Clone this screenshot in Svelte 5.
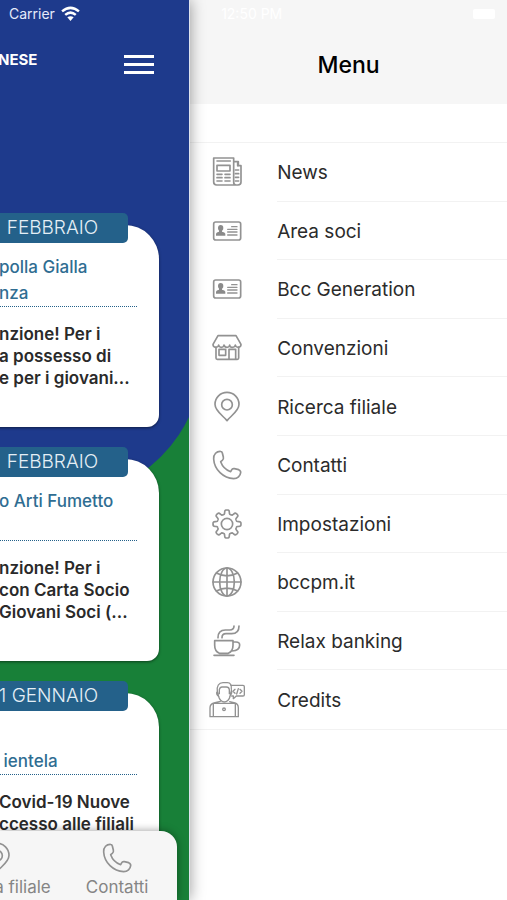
<script lang="ts">
  type Card = { date: string; title: string[]; body: string[] };

  const cards: Card[] = [
    {
      date: 'FEBBRAIO',
      title: ['polla Gialla', 'nza'],
      body: ['nzione! Per i', 'a possesso di', 'e per i giovani...'],
    },
    {
      date: 'FEBBRAIO',
      title: ['o Arti Fumetto'],
      body: ['nzione! Per i', 'con Carta Socio', 'Giovani Soci (...'],
    },
    {
      date: '1 GENNAIO',
      title: ['', '\u00a0ientela'],
      body: ['Covid-19 Nuove', 'ccesso alle filiali'],
    },
  ];

  const menu = [
    { icon: 'news', label: 'News' },
    { icon: 'card', label: 'Area soci' },
    { icon: 'card', label: 'Bcc Generation' },
    { icon: 'shop', label: 'Convenzioni' },
    { icon: 'pin', label: 'Ricerca filiale' },
    { icon: 'phone', label: 'Contatti' },
    { icon: 'gear', label: 'Impostazioni' },
    { icon: 'globe', label: 'bccpm.it' },
    { icon: 'cup', label: 'Relax banking' },
    { icon: 'developer', label: 'Credits' },
  ];

  // eight rounded teeth around the centre of the 108 x 108 icon box
  function gearPath() {
    const points: string[] = [];
    for (let i = 0; i < 160; i++) {
      const a = (i / 160) * Math.PI * 2;
      const r = 36 + 6 * Math.tanh(2.6 * Math.cos(a * 8));
      points.push(`${(54 + r * Math.cos(a)).toFixed(1)} ${(54 + r * Math.sin(a)).toFixed(1)}`);
    }
    return `M${points.join('L')}Z`;
  }

  const gear = gearPath();
</script>

{#snippet icon(name: string)}
  <svg class="icon" viewBox="0 0 108 108" aria-hidden="true">
    {#if name === 'news'}
      <path d="M74 84V12H14v72q0 9 9 9h64q9 0 9-9V35h-8V23H75M74 84q0 9 7 9" />
      <path d="M24 21h40M24 34h39v17H24zM24 61h15M48 61h15M24 71h15M48 71h15M24 81h15M48 81h15M79 48h10M79 59h10M79 70h10M79 81h10M86 35v-9" />
    {:else if name === 'card'}
      <rect x="14" y="27" width="81" height="54" rx="6" />
      <g class="solid">
        <ellipse cx="35" cy="45" rx="8" ry="9" />
        <path d="M21 68v-6q1-4 9-6v-5h9v5q9 2 10 6v6z" />
      </g>
      <path class="thin" d="M68 41h16M56 49h28M56 57h28M56 66h28" />
    {:else if name === 'shop'}
      <path d="M27 17h54l15 26q0 9-8 9t-9-7q-1 7-9 7t-8-7q-1 7-8 7t-9-7q-1 7-8 7t-8-7q-1 7-9 7-8 0-8-9z" />
      <path d="M21 51v33q0 4 4 4h60q4 0 4-4V51M30 58h20v18H30zM60 88V58h20v30" />
    {:else if name === 'pin'}
      <path d="M54 95C46 83 18 68 18 46a36 36 0 0 1 72 0C90 68 62 83 54 95z" />
      <circle cx="54" cy="47" r="16" />
    {:else if name === 'phone'}
      <path d="M35 13c-12-1-22 9-21 23 2 32 29 58 60 59 12 0 20-9 21-18 1-5-2-7-6-9l-13-3c-5-1-7 1-9 5l-2 4C51 69 40 58 35 44l5-4c4-3 4-6 3-10l-3-12c-1-3-2-5-5-5z" />
    {:else if name === 'gear'}
      <path d={gear} />
      <circle cx="54" cy="54" r="17" />
    {:else if name === 'globe'}
      <circle cx="54" cy="54" r="42" />
      <ellipse cx="54" cy="54" rx="22" ry="42" />
      <path d="M54 12v84M12 54h84M22 27q32 17 64 0M22 81q32-17 64 0" />
    {:else if name === 'cup'}
      <path d="M17 53h55v14q0 18-14 24H31Q17 85 17 67zM72 57h9q11 0 11 9 0 17-23 18M15 97h60" />
      <path d="M27 44c0-18 8-23 22-23h13c9 0 13-4 13-12M39 44c0-9 3-12 12-12h17c15 0 22-8 22-23" />
    {:else}
      <g class="thin">
        <path d="M25 28c-2-16 4-26 17-26h13c10 0 13 8 12 20M25 28l4 16c2 9 10 16 17 16s15-7 17-16l3-15M31 35V23q2-8 8-8h13q8 0 9 8v12M25 28q-6 8 5 16M67 25q4 8-5 18" />
        <path d="M11 104H3V78q0-12 12-15l19-5M62 59l16 4q10 3 10 15v26h-8M13 64h66v40H13zM13 64v40M79 64v40" />
        <circle cx="45" cy="82" r="4" />
        <path d="M66 10h36q4 0 4 4v24q0 4-4 4H82l-9 8v-8h-5M78 22l-6 6 6 6M93 22l6 6-6 6M88 20l-5 16" />
      </g>
    {/if}
  </svg>
{/snippet}

<div class="screen">
  <main class="app">
    <div class="status">
      <span>Carrier</span>
      <svg class="wifi" viewBox="0 0 54 42" aria-hidden="true">
        <path d="M3 15Q27-5 51 15M12 25Q27 12 42 25" />
        <path class="dot" d="M18 32q9-7 18 0l-9 10z" />
      </svg>
    </div>

    <header class="app-header">
      <span class="brand">NESE</span>
      <button class="burger" type="button" aria-label="Menu">
        <span></span>
        <span></span>
        <span></span>
      </button>
    </header>

    <div class="feed">
      {#each cards as card}
        <article>
          <div class="date">{card.date}</div>
          <div class="card">
            <h2>
              {#each card.title as line}
                <span>{line}</span>
              {/each}
            </h2>
            <p>
              {#each card.body as line}
                <span>{line}</span>
              {/each}
            </p>
          </div>
        </article>
      {/each}
    </div>

    <nav class="tabs">
      <a href="#filiale">{@render icon('pin')}Ricerca filiale</a>
      <a href="#contatti">{@render icon('phone')}Contatti</a>
    </nav>
  </main>

  <aside class="drawer">
    <header class="drawer-header">
      <div class="status faint">
        <span>12:50 PM</span>
        <i class="battery"></i>
      </div>
      <h1>Menu</h1>
    </header>
    <nav class="menu">
      {#each menu as item}
        <a href="#{item.label}">
          {@render icon(item.icon)}
          <span class="label">{item.label}</span>
        </a>
      {/each}
    </nav>
  </aside>
</div>

<style>
  :global(body) {
    margin: 0;
  }

  .screen {
    display: flex;
    height: 100vh;
    min-height: 740px;
    overflow: hidden;
    background: #fff;
    font-family: Inter, 'Liberation Sans', sans-serif;
  }

  .icon {
    flex: none;
    width: 36px;
    height: 36px;
    fill: none;
    stroke: #929292;
    stroke-width: 5;
    stroke-linejoin: round;
    stroke-linecap: round;
  }
  .icon .solid { fill: #8a8a8a; stroke: none; }
  .icon .thin { stroke-width: 4; }

  .status {
    display: flex;
    align-items: center;
    gap: 6px;
    height: 27px;
    padding: 0 9px;
    font-size: 14px;
    color: #e6eafa;
  }

  .wifi {
    width: 19px;
    height: 15px;
    fill: none;
    stroke: #fff;
    stroke-width: 7;
  }
  .wifi .dot { fill: #fff; stroke: none; }

  /* app page, pushed aside by the drawer */
  .app {
    position: relative;
    z-index: 1;
    box-sizing: border-box;
    flex: none;
    width: 37.5%;
    overflow: hidden;
    background: #188038;
    border-right: 1px solid #dfe3ee;
    box-shadow: 0 0 14px rgba(0, 0, 0, 0.4);
    isolation: isolate;
  }

  .app::before {
    content: '';
    position: absolute;
    z-index: -1;
    top: 0;
    left: 0;
    right: -14px;
    height: 499px;
    background: #1e3a8c;
    border-bottom-right-radius: 144px;
  }

  .app-header {
    display: flex;
    align-items: center;
    justify-content: space-between;
    height: 74px;
    margin-left: -2px;
    padding-right: 35px;
  }

  .brand {
    height: 28px;
    font-size: 15px;
    font-weight: 700;
    color: #fff;
  }

  .burger {
    display: flex;
    flex-direction: column;
    gap: 5px;
    width: 30px;
    padding: 0;
    border: 0;
    background: none;
  }
  .burger span { height: 3px; background: #fff; }

  .feed {
    display: flex;
    flex-direction: column;
    gap: 20px;
    margin: 112px 30px 0 -20px;
  }

  .date {
    position: relative;
    height: 30px;
    margin-right: 31px;
    padding-right: 30px;
    border-radius: 5px;
    background: #24618a;
    color: #e4eff6;
    font-size: 19px;
    font-weight: 300;
    line-height: 30px;
    text-align: right;
    white-space: nowrap;
  }

  .card {
    box-sizing: border-box;
    height: 202px;
    margin-top: -18px;
    padding: 29px 22px 0 19px;
    border-radius: 0 34px 12px 0;
    background: #fff;
    box-shadow: 0 1px 3px rgba(0, 0, 0, 0.5);
    white-space: nowrap;
  }

  .card h2 {
    height: 52px;
    margin: 0;
    border-bottom: 1px dotted #24618a;
    color: #2f6d92;
    font-size: 17px;
    font-weight: 500;
    line-height: 26px;
  }

  .card p {
    margin: 16px 0 0;
    color: #2a2a2a;
    font-size: 17px;
    font-weight: 600;
    line-height: 22px;
  }

  .card span {
    display: block;
    min-height: 22px;
  }
  .card h2 span { min-height: 26px; }

  .tabs {
    position: absolute;
    left: 0;
    right: 12px;
    bottom: 0;
    display: flex;
    justify-content: flex-end;
    height: 69px;
    overflow: hidden;
    border-radius: 0 16px 0 0;
    background: #f6f6f6;
    box-shadow: 0 0 8px rgba(0, 0, 0, 0.4);
  }

  .tabs a {
    display: flex;
    flex: none;
    flex-direction: column;
    align-items: center;
    gap: 1px;
    width: 120px;
    padding-top: 9px;
    color: #858585;
    font-size: 17px;
    line-height: 20px;
    text-decoration: none;
    white-space: nowrap;
  }

  /* side drawer */
  .drawer {
    flex: 1;
    min-width: 0;
  }

  .drawer-header {
    height: 104px;
    background: #f6f6f6;
  }

  .faint {
    justify-content: space-between;
    padding: 0 12px 0 31px;
    color: #fff;
  }

  .battery {
    width: 22px;
    height: 10px;
    border-radius: 2px;
    background: #fff;
  }

  h1 {
    margin: 0;
    padding-top: 23px;
    color: #000;
    font-size: 23px;
    font-weight: 500;
    line-height: 30px;
    text-align: center;
  }

  .menu {
    display: grid;
    grid-auto-rows: 1fr;
    height: 586px;
    margin-top: 38px;
    border-top: 1px solid #f2f2f2;
    border-bottom: 1px solid #f2f2f2;
  }

  .menu a {
    display: flex;
    align-items: center;
    gap: 32px;
    padding-left: 19px;
    color: #2b2b2b;
    font-size: 19px;
    text-decoration: none;
  }

  .label {
    display: flex;
    flex: 1;
    align-items: center;
    align-self: stretch;
    padding-top: 2px;
    border-bottom: 1px solid #f2f2f2;
  }

  .menu a:last-child .label { border-bottom: 0; }
</style>
